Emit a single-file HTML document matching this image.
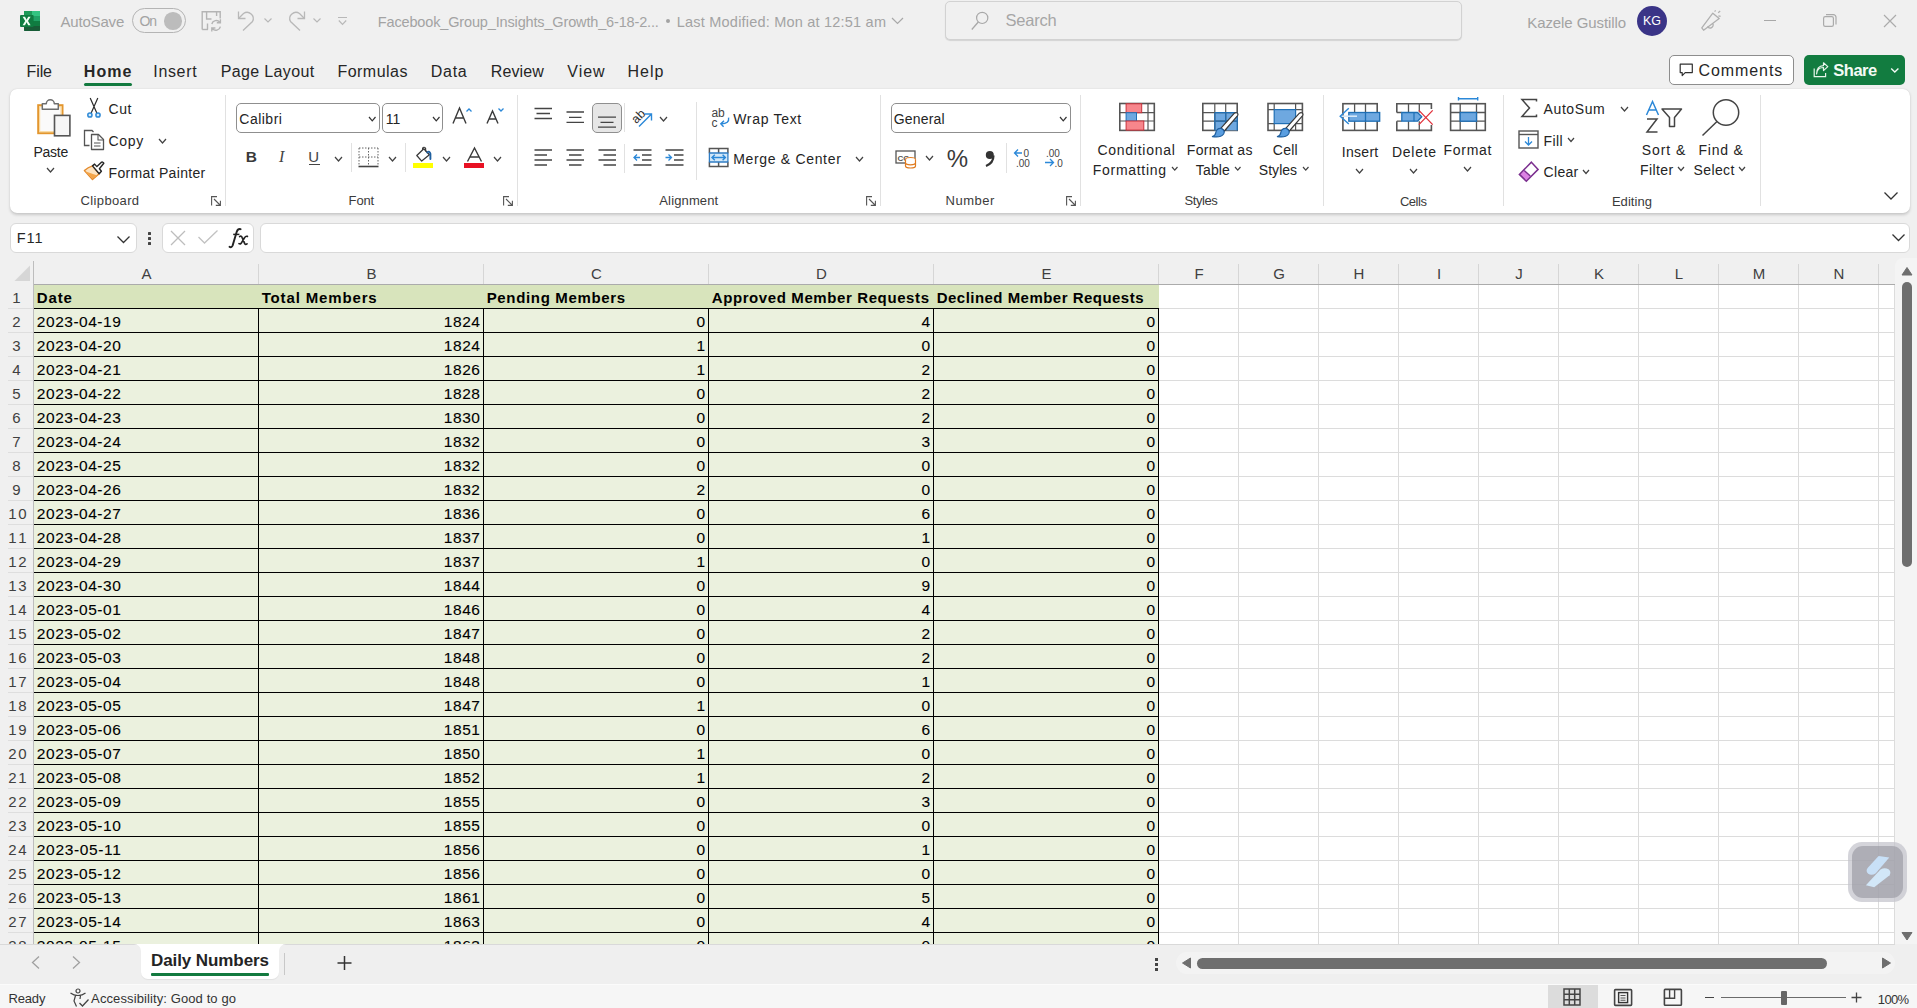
<!DOCTYPE html>
<html><head><meta charset="utf-8"><title>Excel</title>
<style>
html,body{margin:0;padding:0;}
body{width:1917px;height:1008px;overflow:hidden;position:relative;background:#f0f0f0;font-family:"Liberation Sans",sans-serif;}
.t{position:absolute;white-space:pre;line-height:1;}
.r{position:absolute;box-sizing:border-box;}
svg.r{overflow:visible;}
</style></head><body>
<svg class="r" style="left:20px;top:11px;" width="20" height="20" viewBox="0 0 20 20">
      <rect x="4" y="0" width="16" height="20" rx="1" fill="#21a366"/>
      <rect x="4" y="0" width="8" height="5" fill="#1d9a58"/>
      <rect x="12" y="0" width="8" height="5" fill="#33c481"/>
      <rect x="4" y="10" width="16" height="5" fill="#107c41"/>
      <path d="M4 15 H20 V19 A1 1 0 0 1 19 20 H5 A1 1 0 0 1 4 19 Z" fill="#185c37"/>
      <rect x="0" y="4" width="13.6" height="12" rx="1" fill="#107c41"/>
      <path d="M2.6 5.8 L5 5.8 L6.6 8.7 L8.2 5.8 L10.6 5.8 L8 10 L10.6 14.2 L8.2 14.2 L6.6 11.3 L5 14.2 L2.6 14.2 L5.2 10 Z" fill="#f0fff4"/>
    </svg><div class="t" style="left:60.40px;top:14.00px;font-size:15px;color:#a3a3a3;letter-spacing:-0.164px;">AutoSave</div><div class="r" style="left:132px;top:8px;width:54px;height:25px;border:1px solid #b4b4b4;border-radius:13px;"></div><div class="t" style="left:139.56px;top:13.95px;font-size:14px;color:#a3a3a3;letter-spacing:-1.272px;">On</div><div class="r" style="left:164px;top:12px;width:17.5px;height:17.5px;border-radius:50%;background:#bcbcbc;"></div><svg class="r" style="left:201px;top:11px;" width="22" height="21" viewBox="0 0 22 21">
      <path d="M1.2 18.5 V0.8 H19.2 V7.5" fill="none" stroke="#b4b4b4" stroke-width="1.4"/>
      <path d="M1.2 18.5 H7" fill="none" stroke="#b4b4b4" stroke-width="1.4"/>
      <path d="M5.6 0.8 V8 H10.5 M15.6 0.8 V5" fill="none" stroke="#b4b4b4" stroke-width="1.4"/>
      <path d="M6.5 12.5 V18.5" fill="none" stroke="#b4b4b4" stroke-width="1.4"/>
      <path d="M10.8 13 A4.6 4.6 0 0 1 18.8 11.2 M19.4 8.2 V11.8 H15.8" fill="none" stroke="#b4b4b4" stroke-width="1.4"/>
      <path d="M19.4 15.6 A4.6 4.6 0 0 1 11.4 17.6 M10.8 20.4 V17 H14.4" fill="none" stroke="#b4b4b4" stroke-width="1.4"/>
    </svg><svg class="r" style="left:236px;top:10px;" width="22" height="22" viewBox="0 0 22 22">
      <path d="M2.5 1.5 V8.5 H9.5" fill="none" stroke="#b8b8b8" stroke-width="1.3"/>
      <path d="M2.8 8.2 L7.5 3.5 A6.2 6.2 0 0 1 16.5 11.5 L7 20.5" fill="none" stroke="#b8b8b8" stroke-width="1.3"/>
    </svg><svg class="r" style="left:263px;top:17px;" width="10" height="7" viewBox="0 0 10 7"><path d="M1.5 1.5 L5 5 L8.5 1.5" fill="none" stroke="#b8b8b8" stroke-width="1.2"/></svg><svg class="r" style="left:285px;top:10px;" width="22" height="22" viewBox="0 0 22 22">
      <path d="M19.5 1.5 V8.5 H12.5" fill="none" stroke="#b8b8b8" stroke-width="1.3"/>
      <path d="M19.2 8.2 L14.5 3.5 A6.2 6.2 0 0 0 5.5 11.5 L15 20.5" fill="none" stroke="#b8b8b8" stroke-width="1.3"/>
    </svg><svg class="r" style="left:312px;top:17px;" width="10" height="7" viewBox="0 0 10 7"><path d="M1.5 1.5 L5 5 L8.5 1.5" fill="none" stroke="#b8b8b8" stroke-width="1.2"/></svg><svg class="r" style="left:337px;top:16px;" width="11" height="10" viewBox="0 0 11 10"><path d="M1 1.5 H10 M1.8 4.5 L5.5 8.3 L9.2 4.5" fill="none" stroke="#b8b8b8" stroke-width="1.2"/></svg><div class="t" style="left:377.83px;top:14.53px;font-size:14.5px;color:#a3a3a3;letter-spacing:-0.151px;">Facebook_Group_Insights_Growth_6-18-2...</div><div class="r" style="left:665.5px;top:19.3px;width:4px;height:4px;border-radius:50%;background:#a3a3a3;"></div><div class="t" style="left:676.83px;top:14.53px;font-size:14.5px;color:#a3a3a3;letter-spacing:0.208px;">Last Modified: Mon at 12:51 am</div><svg class="r" style="left:891px;top:17px;" width="13" height="8" viewBox="0 0 13 8"><path d="M1 1 L6.5 6.5 L12 1" fill="none" stroke="#a8a8a8" stroke-width="1.2"/></svg><div class="r" style="left:945px;top:1px;width:517px;height:39px;border:1px solid #d2d2d2;border-radius:5px;background:#f0f0f0;box-shadow:0 1px 1px rgba(0,0,0,0.12);"></div><svg class="r" style="left:970px;top:10px;" width="20" height="22" viewBox="0 0 20 22"><circle cx="12.2" cy="7.9" r="5.6" fill="none" stroke="#a8a8a8" stroke-width="1.2"/><path d="M8.3 12 L1.8 19.5" stroke="#a8a8a8" stroke-width="1.3"/></svg><div class="t" style="left:1005.61px;top:11.93px;font-size:16.5px;color:#a6a6a6;letter-spacing:-0.243px;">Search</div><div class="t" style="left:1527.30px;top:14.50px;font-size:15px;color:#a3a3a3;letter-spacing:-0.096px;">Kazele Gustillo</div><div class="r" style="left:1637px;top:6px;width:30px;height:30px;border-radius:50%;background:#3a3487;"></div><div class="t" style="left:1642.97px;top:15.22px;font-size:12.5px;color:#ffffff;">KG</div><svg class="r" style="left:1700px;top:10px;" width="22" height="22" viewBox="0 0 22 22">
      <path d="M1.8 17.8 L12.8 3.2 L19.2 8.6 L3.6 20.2 Z" fill="none" stroke="#b0b0b0" stroke-width="1.3" stroke-linejoin="round"/>
      <path d="M7.6 16.4 A2.8 2.8 0 0 0 12.8 13.6" fill="none" stroke="#b0b0b0" stroke-width="1.3"/>
      <path d="M14.6 1.6 L15.6 0.4 M18.2 2.8 L20.2 1 M18.4 5.8 L20.6 6.4" stroke="#b0b0b0" stroke-width="1.2"/>
    </svg><div class="r" style="left:1764px;top:19.5px;width:12px;height:1.2px;background:#a8a8a8;"></div><svg class="r" style="left:1822px;top:13px;" width="16" height="16" viewBox="0 0 16 16"><rect x="1.6" y="3.6" width="9.8" height="9.8" rx="1.6" fill="none" stroke="#ababab" stroke-width="1.2"/><path d="M4 1.6 H11.4 A2.6 2.6 0 0 1 14 4.2 V11.6" fill="none" stroke="#ababab" stroke-width="1.2"/></svg><svg class="r" style="left:1883px;top:14px;" width="14" height="14" viewBox="0 0 14 14"><path d="M1 1 L13 13 M13 1 L1 13" stroke="#ababab" stroke-width="1.2"/></svg>
<div class="t" style="left:26.54px;top:64.26px;font-size:16px;color:#262626;letter-spacing:-0.104px;">File</div><div class="t" style="left:83.84px;top:64.26px;font-size:16px;color:#262626;font-weight:700;letter-spacing:1.072px;">Home</div><div class="r" style="left:84px;top:83px;width:48px;height:3px;background:#137a3f;border-radius:2px;"></div><div class="t" style="left:153.34px;top:64.26px;font-size:16px;color:#262626;letter-spacing:0.651px;">Insert</div><div class="t" style="left:220.74px;top:64.26px;font-size:16px;color:#262626;letter-spacing:0.358px;">Page Layout</div><div class="t" style="left:337.44px;top:64.26px;font-size:16px;color:#262626;letter-spacing:0.469px;">Formulas</div><div class="t" style="left:430.74px;top:64.26px;font-size:16px;color:#262626;letter-spacing:0.724px;">Data</div><div class="t" style="left:490.84px;top:64.26px;font-size:16px;color:#262626;letter-spacing:0.080px;">Review</div><div class="t" style="left:567.34px;top:64.26px;font-size:16px;color:#262626;letter-spacing:0.959px;">View</div><div class="t" style="left:627.54px;top:64.26px;font-size:16px;color:#262626;letter-spacing:0.954px;">Help</div><div class="r" style="left:1669px;top:55px;width:125px;height:30px;border:1px solid #8d8d8d;border-radius:5px;background:#fff;"></div><svg class="r" style="left:1679px;top:63px;" width="15" height="15" viewBox="0 0 15 15"><path d="M1.2 1.2 H13.3 V9.6 H6.2 L3.2 12.6 V9.6 H1.2 Z" fill="none" stroke="#303030" stroke-width="1.2" stroke-linejoin="round"/></svg><div class="t" style="left:1698.54px;top:63.36px;font-size:16px;color:#262626;letter-spacing:0.916px;">Comments</div><div class="r" style="left:1804px;top:55px;width:101px;height:30px;background:#127c40;border-radius:5px;"></div><svg class="r" style="left:1813px;top:62px;" width="16" height="16" viewBox="0 0 16 16"><path d="M1.2 6.5 V14.6 H12.6 V11" fill="none" stroke="#e8f5ea" stroke-width="1.2"/><path d="M3.6 12 C4 7.5 6.5 5.5 10.5 5.5 V8.6 L14.8 4.6 L10.5 0.8 V3.6 C6 3.8 3.6 7 3.6 12 Z" fill="none" stroke="#e8f5ea" stroke-width="1.2" stroke-linejoin="round"/></svg><div class="t" style="left:1833.31px;top:62.23px;font-size:16.5px;color:#f4fbf5;font-weight:700;letter-spacing:-0.498px;">Share</div><svg class="r" style="left:1890px;top:67px;" width="10" height="7" viewBox="0 0 10 7"><path d="M1.2 1.5 L4.8 5 L8.4 1.5" fill="none" stroke="#f4fbf5" stroke-width="1.4"/></svg>
<div class="r" style="left:10px;top:89px;width:1900px;height:124px;background:#fff;border-radius:7px;box-shadow:0 1.5px 3px rgba(0,0,0,0.16),0 0 1px rgba(0,0,0,0.12);"></div><div class="r" style="left:225px;top:95px;width:1px;height:111px;background:#e1e1e1;"></div><div class="r" style="left:517px;top:95px;width:1px;height:111px;background:#e1e1e1;"></div><div class="r" style="left:880px;top:95px;width:1px;height:111px;background:#e1e1e1;"></div><div class="r" style="left:1080px;top:95px;width:1px;height:111px;background:#e1e1e1;"></div><div class="r" style="left:1323px;top:95px;width:1px;height:111px;background:#e1e1e1;"></div><div class="r" style="left:1503px;top:95px;width:1px;height:111px;background:#e1e1e1;"></div><div class="r" style="left:1760px;top:95px;width:1px;height:111px;background:#e1e1e1;"></div><div class="t" style="left:80.62px;top:193.90px;font-size:13px;color:#3b3b3b;letter-spacing:0.354px;">Clipboard</div><div class="t" style="left:348.62px;top:194.00px;font-size:13px;color:#3b3b3b;letter-spacing:-0.139px;">Font</div><div class="t" style="left:659.32px;top:193.80px;font-size:13px;color:#3b3b3b;letter-spacing:0.134px;">Alignment</div><div class="t" style="left:945.62px;top:193.90px;font-size:13px;color:#3b3b3b;letter-spacing:0.490px;">Number</div><div class="t" style="left:1184.62px;top:194.40px;font-size:13px;color:#3b3b3b;letter-spacing:-0.461px;">Styles</div><div class="t" style="left:1399.92px;top:194.50px;font-size:13px;color:#3b3b3b;letter-spacing:-0.452px;">Cells</div><div class="t" style="left:1611.92px;top:194.50px;font-size:13px;color:#3b3b3b;letter-spacing:0.039px;">Editing</div><svg class="r" style="left:211px;top:196px;" width="11" height="10" viewBox="0 0 11 10"><path d="M0.6 9.4 V0.6 H6" fill="none" stroke="#555" stroke-width="1.1"/><path d="M3 3 L9.5 9.5 M4.8 9.4 H9.4 V4.8" fill="none" stroke="#555" stroke-width="1.1"/></svg><svg class="r" style="left:503px;top:196px;" width="11" height="10" viewBox="0 0 11 10"><path d="M0.6 9.4 V0.6 H6" fill="none" stroke="#555" stroke-width="1.1"/><path d="M3 3 L9.5 9.5 M4.8 9.4 H9.4 V4.8" fill="none" stroke="#555" stroke-width="1.1"/></svg><svg class="r" style="left:866px;top:196px;" width="11" height="10" viewBox="0 0 11 10"><path d="M0.6 9.4 V0.6 H6" fill="none" stroke="#555" stroke-width="1.1"/><path d="M3 3 L9.5 9.5 M4.8 9.4 H9.4 V4.8" fill="none" stroke="#555" stroke-width="1.1"/></svg><svg class="r" style="left:1066px;top:196px;" width="11" height="10" viewBox="0 0 11 10"><path d="M0.6 9.4 V0.6 H6" fill="none" stroke="#555" stroke-width="1.1"/><path d="M3 3 L9.5 9.5 M4.8 9.4 H9.4 V4.8" fill="none" stroke="#555" stroke-width="1.1"/></svg><svg class="r" style="left:1883px;top:191px;" width="16" height="10" viewBox="0 0 16 10"><path d="M1.5 1.5 L8 8 L14.5 1.5" fill="none" stroke="#333" stroke-width="1.3"/></svg><svg class="r" style="left:36px;top:98px;" width="37" height="40" viewBox="0 0 37 40">
      <rect x="2.2" y="7.2" width="24.3" height="28" fill="#fafafa" stroke="#e3962e" stroke-width="2"/>
      <rect x="3.7" y="8.7" width="21.3" height="25" fill="none" stroke="#fbd592" stroke-width="1"/>
      <path d="M6.3 11.3 V5.8 H10.3 A4 4 0 0 1 18.3 5.8 H22.3 V11.3 Z" fill="#fff" stroke="#6e6e6e" stroke-width="1.5" stroke-linejoin="round"/>
      <rect x="18.5" y="17.4" width="15.4" height="20.4" fill="#f6f6f6" stroke="#555" stroke-width="1.6"/>
    </svg><div class="t" style="left:33.56px;top:144.85px;font-size:14px;color:#242424;letter-spacing:-0.274px;">Paste</div><svg class="r" style="left:46px;top:167px;" width="9" height="6" viewBox="0 0 9 6"><path d="M1 1 L4.5 5 L8 1" fill="none" stroke="#424242" stroke-width="1.2"/></svg><svg class="r" style="left:86px;top:97px;" width="16" height="22" viewBox="0 0 16 22">
      <path d="M4.2 1 L10.8 16 M11.8 1 L5.2 16" stroke="#2b2b2b" stroke-width="1.2"/>
      <circle cx="3.9" cy="18" r="2.1" fill="#d6ebfb" stroke="#2f8ad6" stroke-width="1.5"/>
      <circle cx="12" cy="18" r="2.1" fill="#d6ebfb" stroke="#2f8ad6" stroke-width="1.5"/>
    </svg><div class="t" style="left:108.56px;top:101.95px;font-size:14px;color:#242424;letter-spacing:0.509px;">Cut</div><svg class="r" style="left:83px;top:129px;" width="22" height="22" viewBox="0 0 22 22">
      <path d="M6.5 16.5 H1.5 V1.5 H9 L10.5 3" fill="none" stroke="#555" stroke-width="1.3"/>
      <path d="M8.5 5.5 H15.5 L20.5 10.5 V20.5 H8.5 Z" fill="#fff" stroke="#555" stroke-width="1.3" stroke-linejoin="round"/>
      <path d="M15 5.5 V11 H20.5" fill="none" stroke="#555" stroke-width="1.1"/>
      <path d="M11 14 H17.5 M11 17 H17.5" stroke="#555" stroke-width="1.1"/>
    </svg><div class="t" style="left:108.56px;top:133.55px;font-size:14px;color:#242424;letter-spacing:0.676px;">Copy</div><svg class="r" style="left:158px;top:138px;" width="9" height="6" viewBox="0 0 9 6"><path d="M1 1 L4.5 5 L8 1" fill="none" stroke="#424242" stroke-width="1.2"/></svg><svg class="r" style="left:80px;top:157px;" width="28" height="28" viewBox="0 0 28 28">
      <path d="M4.4 13.6 Q8 10.2 12.5 8.9 L19.2 16.7 L12.5 22.5 Z" fill="#fde3c0" stroke="#e38a2c" stroke-width="1.4" stroke-linejoin="round"/>
      <path d="M5 14.2 L17.4 18.4 L12.6 21.8 Z" fill="#f3a54a"/>
      <path d="M12.5 8.9 L14.6 7.1 L16.9 9.6 L21.2 5.4 Q22.6 4.4 23.8 6.2 L19.4 11.7 L21.4 14.2 L19.2 16.7 Z" fill="#fff" stroke="#262626" stroke-width="1.4" stroke-linejoin="round"/>
    </svg><div class="t" style="left:108.56px;top:166.05px;font-size:14px;color:#242424;letter-spacing:0.312px;">Format Painter</div><div class="r" style="left:236px;top:103px;width:144px;height:30px;border:1px solid #8f8f8f;border-radius:5px;"></div><div class="t" style="left:239.36px;top:111.75px;font-size:14px;color:#242424;letter-spacing:0.474px;">Calibri</div><svg class="r" style="left:368px;top:116px;" width="8.5" height="5.8" viewBox="0 0 8.5 5.8"><path d="M1 1 L4.25 4.8 L7.5 1" fill="none" stroke="#333" stroke-width="1.2"/></svg><div class="r" style="left:382px;top:103px;width:61px;height:30px;border:1px solid #8f8f8f;border-radius:5px;"></div><div class="t" style="left:385.66px;top:111.75px;font-size:14px;color:#242424;letter-spacing:0.169px;">11</div><svg class="r" style="left:432px;top:116px;" width="8.5" height="5.8" viewBox="0 0 8.5 5.8"><path d="M1 1 L4.25 4.8 L7.5 1" fill="none" stroke="#333" stroke-width="1.2"/></svg><svg class="r" style="left:451px;top:106px;" width="22" height="19" viewBox="0 0 22 19"><path d="M2 17.5 L8.5 2 L15 17.5 M4.5 12 H12.5" fill="none" stroke="#3a3a3a" stroke-width="1.4"/><path d="M15.5 5.5 L18 3 L20.5 5.5" fill="none" stroke="#2b88d8" stroke-width="1.3"/></svg><svg class="r" style="left:485px;top:106px;" width="20" height="19" viewBox="0 0 20 19"><path d="M2 17.5 L7.5 5 L13 17.5 M4 13 H11" fill="none" stroke="#3a3a3a" stroke-width="1.4"/><path d="M13.5 2.5 L16 5 L18.5 2.5" fill="none" stroke="#2b88d8" stroke-width="1.3"/></svg><div class="t" style="left:245.67px;top:149.48px;font-size:15.5px;color:#3a3a3a;font-weight:700;">B</div><div class="t" style="left:279.04px;top:149.26px;font-size:16px;color:#444;font-style:italic;font-family:'Liberation Serif';">I</div><div class="t" style="left:308.30px;top:148.90px;font-size:15px;color:#444;">U</div><div class="r" style="left:309px;top:164px;width:11px;height:1.4px;background:#444;"></div><svg class="r" style="left:334px;top:156px;" width="9" height="6" viewBox="0 0 9 6"><path d="M1 1 L4.5 5 L8 1" fill="none" stroke="#424242" stroke-width="1.2"/></svg><div class="r" style="left:351px;top:143px;width:1px;height:29px;background:#e1e1e1;"></div><svg class="r" style="left:358px;top:147px;" width="21" height="21" viewBox="0 0 21 21">
      <path d="M1 1 H20 M1 1 V19 M20 1 V19 M1 10 H20 M10.5 1 V19" fill="none" stroke="#666" stroke-width="1" stroke-dasharray="1.5 1.5"/>
      <path d="M0.5 19.5 H20.5" stroke="#444" stroke-width="1.6"/>
    </svg><svg class="r" style="left:388px;top:156px;" width="9" height="6" viewBox="0 0 9 6"><path d="M1 1 L4.5 5 L8 1" fill="none" stroke="#424242" stroke-width="1.2"/></svg><div class="r" style="left:405px;top:143px;width:1px;height:29px;background:#e1e1e1;"></div><svg class="r" style="left:412px;top:146px;" width="22" height="17" viewBox="0 0 22 17">
      <path d="M4.8 9.5 L11.8 2.7 L17.4 8.8 L9.7 15.1 Z" fill="#fff" stroke="#3a3a3a" stroke-width="1.3" stroke-linejoin="round"/>
      <path d="M10.6 4 V2.2 A1.6 1.6 0 0 1 13.6 2.4 V5.5" fill="none" stroke="#3a3a3a" stroke-width="1.2"/>
      <path d="M15.2 6.4 Q17.6 4.4 18.4 7.8 V13" fill="none" stroke="#1f5f9f" stroke-width="1.9" stroke-linecap="round"/>
    </svg><div class="r" style="left:413px;top:163px;width:20px;height:5px;background:#ffff00;"></div><svg class="r" style="left:442px;top:156px;" width="9" height="6" viewBox="0 0 9 6"><path d="M1 1 L4.5 5 L8 1" fill="none" stroke="#424242" stroke-width="1.2"/></svg><svg class="r" style="left:465px;top:147px;" width="20" height="15" viewBox="0 0 20 15"><path d="M2.5 14.5 L9.5 1 L16.5 14.5 M5 10 H14" fill="none" stroke="#3a3a3a" stroke-width="1.4"/></svg><div class="r" style="left:464px;top:163px;width:20px;height:5px;background:#e81123;"></div><svg class="r" style="left:493px;top:156px;" width="9" height="6" viewBox="0 0 9 6"><path d="M1 1 L4.5 5 L8 1" fill="none" stroke="#424242" stroke-width="1.2"/></svg>
<svg class="r" style="left:533px;top:104px;" width="30" height="30" viewBox="0 0 30 30"><path d="M1.5 4.5 H19 M3.5 9.5 H17 M1.5 14.5 H19 " stroke="#444" stroke-width="1.3"/></svg><svg class="r" style="left:565px;top:104px;" width="30" height="30" viewBox="0 0 30 30"><path d="M1.5 8 H19 M4 13.4 H16.5 M1.5 18.4 H19 " stroke="#444" stroke-width="1.3"/></svg><div class="r" style="left:592px;top:103px;width:30px;height:30px;background:#e6e6e6;border:1px solid #8f8f8f;border-radius:5px;"></div><svg class="r" style="left:597px;top:104px;" width="30" height="30" viewBox="0 0 30 30"><path d="M1 13.1 H19 M3.5 18.4 H16.5 M1 23.1 H19 " stroke="#444" stroke-width="1.3"/></svg><div class="r" style="left:624px;top:103px;width:1px;height:29px;background:#e1e1e1;"></div><svg class="r" style="left:631px;top:107px;" width="23" height="21" viewBox="0 0 23 21">
      <text x="0" y="13.5" transform="rotate(-45 7 9)" font-family="Liberation Sans" font-size="12.5" fill="#333">ab</text>
      <path d="M8 19.5 L20 7.5 M14 7 H20.5 V13.5" fill="none" stroke="#2b88d8" stroke-width="1.4"/>
    </svg><svg class="r" style="left:659px;top:116px;" width="9" height="6" viewBox="0 0 9 6"><path d="M1 1 L4.5 5 L8 1" fill="none" stroke="#424242" stroke-width="1.2"/></svg><svg class="r" style="left:533px;top:145px;" width="30" height="30" viewBox="0 0 30 30"><path d="M1.5 5 H19 M1.5 10 H14 M1.5 15 H19 M1.5 20 H14 " stroke="#444" stroke-width="1.3"/></svg><svg class="r" style="left:565px;top:145px;" width="30" height="30" viewBox="0 0 30 30"><path d="M1.5 5 H19 M4 10 H16.5 M1.5 15 H19 M4 20 H16.5 " stroke="#444" stroke-width="1.3"/></svg><svg class="r" style="left:597px;top:145px;" width="30" height="30" viewBox="0 0 30 30"><path d="M1.5 5 H19 M6.5 10 H19 M1.5 15 H19 M6.5 20 H19 " stroke="#444" stroke-width="1.3"/></svg><div class="r" style="left:624px;top:144px;width:1px;height:29px;background:#e1e1e1;"></div><svg class="r" style="left:632px;top:145px;" width="22" height="24" viewBox="0 0 22 24"><path d="M1.5 5 H19.5 M10 10 H19.5 M10 15 H19.5 M1.5 20 H19.5" stroke="#444" stroke-width="1.3"/><path d="M8 12.5 H2 M5 9.5 L2 12.5 L5 15.5" fill="none" stroke="#2b88d8" stroke-width="1.3"/></svg><svg class="r" style="left:664px;top:145px;" width="22" height="24" viewBox="0 0 22 24"><path d="M1.5 5 H19.5 M10 10 H19.5 M10 15 H19.5 M1.5 20 H19.5" stroke="#444" stroke-width="1.3"/><path d="M1.5 12.5 H7.5 M4.5 9.5 L7.5 12.5 L4.5 15.5" fill="none" stroke="#2b88d8" stroke-width="1.3"/></svg><div class="r" style="left:696px;top:102px;width:1px;height:78px;background:#e1e1e1;"></div><svg class="r" style="left:710px;top:107px;" width="22" height="22" viewBox="0 0 22 22">
      <text x="1.4" y="10.4" font-family="Liberation Sans" font-size="12" fill="#444">ab</text>
      <text x="1.6" y="20.2" font-family="Liberation Sans" font-size="12" fill="#444">c</text>
      <path d="M18.6 10.6 Q19.6 16.8 11.2 16.8 M14 13.8 L10.8 16.8 L13.6 19.8" fill="none" stroke="#2b88d8" stroke-width="1.4"/>
    </svg><div class="t" style="left:733.16px;top:111.95px;font-size:14px;color:#242424;letter-spacing:0.700px;">Wrap Text</div><svg class="r" style="left:708px;top:147px;" width="22" height="21" viewBox="0 0 22 21">
      <rect x="2" y="6" width="17.4" height="9" fill="#d3e8f8"/>
      <path d="M1.4 6.2 V1.4 H19.9 V6.2 M1.4 14.8 V19.6 H19.9 V14.8 M10.6 1.4 V6 M10.6 15 V19.6" fill="none" stroke="#555" stroke-width="1.5"/>
      <path d="M1.4 5.8 V15.2 M19.9 5.8 V15.2 M1.4 6 H19.9 M1.4 15 H19.9" fill="none" stroke="#2f7cc4" stroke-width="1.3"/>
      <path d="M4 10.5 H17.4 M6.8 7.8 L4 10.5 L6.8 13.2 M14.6 7.8 L17.4 10.5 L14.6 13.2" fill="none" stroke="#2b88d8" stroke-width="1.4"/>
    </svg><div class="t" style="left:733.16px;top:152.45px;font-size:14px;color:#242424;letter-spacing:0.678px;">Merge &amp; Center</div><svg class="r" style="left:855px;top:156px;" width="9" height="6" viewBox="0 0 9 6"><path d="M1 1 L4.5 5 L8 1" fill="none" stroke="#424242" stroke-width="1.2"/></svg><div class="r" style="left:891px;top:103px;width:180px;height:30px;border:1px solid #8f8f8f;border-radius:5px;"></div><div class="t" style="left:893.76px;top:112.05px;font-size:14px;color:#242424;letter-spacing:0.170px;">General</div><svg class="r" style="left:1059px;top:116px;" width="8.5" height="5.8" viewBox="0 0 8.5 5.8"><path d="M1 1 L4.25 4.8 L7.5 1" fill="none" stroke="#333" stroke-width="1.2"/></svg><svg class="r" style="left:895px;top:150px;" width="23" height="19" viewBox="0 0 23 19">
      <rect x="1" y="1" width="19" height="12" fill="#fff" stroke="#555" stroke-width="1.3"/>
      <text x="2.5" y="10.5" font-family="Liberation Sans" font-weight="700" font-size="8" fill="#555">CC</text>
      <ellipse cx="15.5" cy="9.5" rx="5" ry="2" fill="#fff" stroke="#e07b1f" stroke-width="1.2"/>
      <path d="M10.5 9.5 V16 A5 2 0 0 0 20.5 16 V9.5 M10.5 12.8 A5 2 0 0 0 20.5 12.8" fill="#fff" stroke="#e07b1f" stroke-width="1.2"/>
    </svg><svg class="r" style="left:925px;top:155px;" width="9" height="6" viewBox="0 0 9 6"><path d="M1 1 L4.5 5 L8 1" fill="none" stroke="#424242" stroke-width="1.2"/></svg><div class="t" style="left:946.76px;top:146.88px;font-size:24px;color:#3a3a3a;">%</div><svg class="r" style="left:984px;top:150px;" width="11" height="17" viewBox="0 0 11 17"><circle cx="5.8" cy="5" r="4" fill="#333"/><path d="M9.5 5.5 C9.5 10 7 14 2 16" fill="none" stroke="#333" stroke-width="2.2"/></svg><div class="r" style="left:1006px;top:143px;width:1px;height:30px;background:#e1e1e1;"></div><svg class="r" style="left:1013px;top:147px;" width="22" height="21" viewBox="0 0 22 21">
      <path d="M1.5 6 H9 M5 2.5 L1.5 6 L5 9.5" fill="none" stroke="#2b88d8" stroke-width="1.3"/>
      <text x="10.5" y="10" font-family="Liberation Sans" font-size="10" fill="#444">0</text>
      <text x="3" y="19.5" font-family="Liberation Sans" font-size="10" fill="#444">.00</text>
    </svg><svg class="r" style="left:1044px;top:147px;" width="22" height="21" viewBox="0 0 22 21">
      <text x="2" y="10" font-family="Liberation Sans" font-size="10" fill="#444">.00</text>
      <path d="M1 15.5 H9.5 M6 12 L9.5 15.5 L6 19" fill="none" stroke="#2b88d8" stroke-width="1.3"/>
      <text x="10.5" y="19.5" font-family="Liberation Sans" font-size="10" fill="#444">.0</text>
    </svg><svg class="r" style="left:1118px;top:102px;" width="38" height="30" viewBox="0 0 38 30">
      <rect x="1.8" y="1.5" width="34.5" height="26.9" fill="#fff" stroke="#555" stroke-width="1.6"/>
      <path d="M1.8 10.7 H36.3 M1.8 19 H36.3 M30 1.5 V28.4" stroke="#555" stroke-width="1.2"/>
      <rect x="8.1" y="1.8" width="15.6" height="8.9" fill="#f7868c" stroke="#c8323c" stroke-width="1"/>
      <rect x="8.1" y="10.7" width="10.4" height="8.3" fill="#6ea8e0" stroke="#1f6fb5" stroke-width="1"/>
      <rect x="8.1" y="19" width="17.7" height="9.1" fill="#f7868c" stroke="#c8323c" stroke-width="1"/>
    </svg><div class="t" style="left:1097.46px;top:142.75px;font-size:14px;color:#242424;letter-spacing:0.728px;">Conditional</div><div class="t" style="left:1092.86px;top:162.95px;font-size:14px;color:#242424;letter-spacing:0.692px;">Formatting</div><svg class="r" style="left:1171px;top:166px;" width="7.5" height="5.2" viewBox="0 0 7.5 5.2"><path d="M1 1 L3.75 4.2 L6.5 1" fill="none" stroke="#424242" stroke-width="1.2"/></svg><svg class="r" style="left:1199px;top:102px;" width="44" height="38" viewBox="0 0 44 38">
      <rect x="3.8" y="1.5" width="34.4" height="26.9" fill="#fff" stroke="#555" stroke-width="1.6"/>
      <rect x="15.8" y="10.7" width="22.4" height="17.7" fill="#6ea8e0"/>
      <path d="M3.8 10.7 H38.2 M3.8 19.2 H38.2 M15.8 1.5 V28.4 M26.7 1.5 V28.4" stroke="#555" stroke-width="1.2"/>
      <path d="M15.8 10.7 H38.2 M15.8 19.2 H38.2 M15.8 10.7 V28.4 M26.7 10.7 V28.4 M38.2 10.7 V28.4" stroke="#1f6fb5" stroke-width="1.2"/>

      <path d="M38.2 10.9 Q39.6 12 38.6 13.6 L25.4 29 L22 26.2 L35.4 11.2 Q36.8 10 38.2 10.9 Z" fill="#fff" stroke="#3a3a3a" stroke-width="1.2" stroke-linejoin="round"/>
      <path d="M22.2 26.4 Q26.6 28.6 24.6 32 Q21.6 36 13.4 34.6 Q16.4 33.6 16.8 30.6 Q17.6 26 22.2 26.4 Z" fill="#5a9ee0" stroke="#1f5f9f" stroke-width="1.2" stroke-linejoin="round"/>
    </svg><div class="t" style="left:1186.76px;top:142.75px;font-size:14px;color:#242424;letter-spacing:0.339px;">Format as</div><div class="t" style="left:1195.86px;top:162.95px;font-size:14px;color:#242424;letter-spacing:0.137px;">Table</div><svg class="r" style="left:1234px;top:166px;" width="7.5" height="5.2" viewBox="0 0 7.5 5.2"><path d="M1 1 L3.75 4.2 L6.5 1" fill="none" stroke="#424242" stroke-width="1.2"/></svg><svg class="r" style="left:1264px;top:102px;" width="44" height="38" viewBox="0 0 44 38">
      <rect x="4" y="1.5" width="34.4" height="26.9" fill="#fff" stroke="#555" stroke-width="1.6"/>
      <path d="M4 7.6 H10.2 M31.6 7.6 H38.4 M4 21.6 H10.2 M31.6 21.6 H38.4 M10.2 1.5 V7.6 M10.2 21.6 V28.4 M31.6 1.5 V7.6 M31.6 21.6 V28.4" stroke="#555" stroke-width="1.2"/>
      <rect x="10.2" y="7.6" width="21.4" height="14" fill="#6ea8e0" stroke="#1f6fb5" stroke-width="1.2"/>

      <path d="M38.2 10.9 Q39.6 12 38.6 13.6 L25.4 29 L22 26.2 L35.4 11.2 Q36.8 10 38.2 10.9 Z" fill="#fff" stroke="#3a3a3a" stroke-width="1.2" stroke-linejoin="round"/>
      <path d="M22.2 26.4 Q26.6 28.6 24.6 32 Q21.6 36 13.4 34.6 Q16.4 33.6 16.8 30.6 Q17.6 26 22.2 26.4 Z" fill="#5a9ee0" stroke="#1f5f9f" stroke-width="1.2" stroke-linejoin="round"/>
    </svg><div class="t" style="left:1272.86px;top:142.75px;font-size:14px;color:#242424;letter-spacing:0.230px;">Cell</div><div class="t" style="left:1258.86px;top:162.95px;font-size:14px;color:#242424;letter-spacing:0.015px;">Styles</div><svg class="r" style="left:1301.5px;top:166px;" width="7.5" height="5.2" viewBox="0 0 7.5 5.2"><path d="M1 1 L3.75 4.2 L6.5 1" fill="none" stroke="#424242" stroke-width="1.2"/></svg><svg class="r" style="left:1335px;top:92px;" width="50" height="42" viewBox="0 0 50 42">
      <rect x="7.9" y="11.7" width="34.3" height="26.7" fill="#fff" stroke="#555" stroke-width="1.6"/>
      <path d="M19.6 11.7 V38.4 M30.5 11.7 V38.4" stroke="#555" stroke-width="1.3"/>
      <rect x="13.8" y="20.5" width="30.9" height="8.7" fill="#6ea8e0" stroke="#1f6fb5" stroke-width="1.3"/>
      <path d="M30.5 20.5 V29.2" stroke="#1f6fb5" stroke-width="1.3"/>
      <path d="M5.2 24.2 H22" stroke="#d6e8f8" stroke-width="1.6"/>
      <path d="M13.8 16.3 L5.2 24.2 L13.8 32.1" fill="none" stroke="#2b88d8" stroke-width="1.4"/>
    </svg><div class="t" style="left:1341.76px;top:144.85px;font-size:14px;color:#242424;letter-spacing:0.300px;">Insert</div><svg class="r" style="left:1355px;top:168px;" width="9" height="6" viewBox="0 0 9 6"><path d="M1 1 L4.5 5 L8 1" fill="none" stroke="#424242" stroke-width="1.2"/></svg><svg class="r" style="left:1390px;top:92px;" width="46" height="42" viewBox="0 0 46 42">
      <path d="M6.8 20.5 V11.7 H41.4 V17 M6.8 29.2 V38.4 H41.4 V33" fill="none" stroke="#555" stroke-width="1.6"/>
      <path d="M18.5 11.7 V20.5 M29.3 11.7 V20.5 M18.5 29.2 V38.4 M29.3 29.2 V38.4 M6.8 20.5 H11.8 M6.8 29.2 H11.8" stroke="#555" stroke-width="1.3"/>
      <path d="M11.8 20.5 H27.5 L31.8 24.8 L27.5 29.2 H11.8 Z" fill="#6ea8e0" stroke="#1f6fb5" stroke-width="1.3" stroke-linejoin="round"/>
      <path d="M24 20.5 V29.2" stroke="#1f6fb5" stroke-width="1.2"/>
      <path d="M28.9 18.4 L42.7 32.6 M42.7 18.4 L28.9 32.6" stroke="#e0303a" stroke-width="1.3"/>
    </svg><div class="t" style="left:1392.06px;top:144.85px;font-size:14px;color:#242424;letter-spacing:0.709px;">Delete</div><svg class="r" style="left:1409px;top:168px;" width="9" height="6" viewBox="0 0 9 6"><path d="M1 1 L4.5 5 L8 1" fill="none" stroke="#424242" stroke-width="1.2"/></svg><svg class="r" style="left:1445px;top:92px;" width="46" height="42" viewBox="0 0 46 42">
      <path d="M13.5 5 V8.5 M32.7 5 V8.5 M13.5 6.7 H32.7" stroke="#2b88d8" stroke-width="1.4"/>
      <rect x="5.6" y="11.7" width="34.7" height="26.7" fill="#fff" stroke="#555" stroke-width="1.6"/>
      <path d="M15.2 11.7 V38.4 M31.5 11.7 V38.4 M5.6 20.5 H40.3 M5.6 29.2 H40.3" stroke="#555" stroke-width="1.3"/>
      <rect x="15.2" y="20.5" width="16.3" height="8.7" fill="#6ea8e0" stroke="#1f6fb5" stroke-width="1.3"/>
    </svg><div class="t" style="left:1443.56px;top:143.05px;font-size:14px;color:#242424;letter-spacing:0.697px;">Format</div><svg class="r" style="left:1463px;top:166px;" width="9" height="6" viewBox="0 0 9 6"><path d="M1 1 L4.5 5 L8 1" fill="none" stroke="#424242" stroke-width="1.2"/></svg><svg class="r" style="left:1520px;top:98px;" width="18" height="20" viewBox="0 0 18 20"><path d="M16.5 3.5 V1.5 H2 L9.5 10 L2 18.5 H16.5 V16.5" fill="none" stroke="#444" stroke-width="1.5" stroke-linejoin="miter"/></svg><div class="t" style="left:1543.56px;top:102.15px;font-size:14px;color:#242424;letter-spacing:0.604px;">AutoSum</div><svg class="r" style="left:1620px;top:106px;" width="9" height="6" viewBox="0 0 9 6"><path d="M1 1 L4.5 5 L8 1" fill="none" stroke="#424242" stroke-width="1.2"/></svg><svg class="r" style="left:1518px;top:130px;" width="22" height="20" viewBox="0 0 22 20">
      <rect x="1" y="1" width="19" height="17" fill="#fff" stroke="#555" stroke-width="1.4"/>
      <path d="M1 4.5 H20" stroke="#555" stroke-width="1.4"/>
      <path d="M10.5 7 V15 M7 11.5 L10.5 15 L14 11.5" fill="none" stroke="#2b88d8" stroke-width="1.3"/>
    </svg><div class="t" style="left:1543.56px;top:133.75px;font-size:14px;color:#242424;letter-spacing:0.375px;">Fill</div><svg class="r" style="left:1567px;top:137px;" width="8" height="5.5" viewBox="0 0 8 5.5"><path d="M1 1 L4.0 4.5 L7 1" fill="none" stroke="#424242" stroke-width="1.2"/></svg><svg class="r" style="left:1512px;top:158px;" width="34" height="28" viewBox="0 0 34 28">
      <path d="M7.4 16.4 L12.2 12.5 L18.3 18 L14.3 23.2 Z" fill="#dc82e3"/>
      <path d="M19.4 4.2 L26.1 11.4 L14.3 23.2 L7.4 16.4 Z" fill="none" stroke="#7b2f8f" stroke-width="1.5" stroke-linejoin="miter"/>
      <path d="M12.2 12.5 L18.3 18" stroke="#7b2f8f" stroke-width="1.4"/>
    </svg><div class="t" style="left:1543.56px;top:165.45px;font-size:14px;color:#242424;letter-spacing:0.316px;">Clear</div><svg class="r" style="left:1582px;top:169px;" width="8" height="5.5" viewBox="0 0 8 5.5"><path d="M1 1 L4.0 4.5 L7 1" fill="none" stroke="#424242" stroke-width="1.2"/></svg><svg class="r" style="left:1645px;top:100px;" width="40" height="35" viewBox="0 0 40 35">
      <path d="M1.5 15 L7.5 1.5 L13.5 15 M3.8 10 H11.2" fill="none" stroke="#2b88d8" stroke-width="1.5"/>
      <path d="M2 19 H12 L2 32 H12.5" fill="none" stroke="#444" stroke-width="1.5"/>
      <path d="M17 9 H36.5 L29.5 17.5 V26.5 H24.5 V17.5 Z" fill="none" stroke="#444" stroke-width="1.5" stroke-linejoin="round"/>
    </svg><div class="t" style="left:1641.66px;top:142.95px;font-size:14px;color:#242424;letter-spacing:0.959px;">Sort &amp;</div><div class="t" style="left:1639.96px;top:162.65px;font-size:14px;color:#242424;letter-spacing:0.401px;">Filter</div><svg class="r" style="left:1677px;top:166px;" width="8" height="5.5" viewBox="0 0 8 5.5"><path d="M1 1 L4.0 4.5 L7 1" fill="none" stroke="#424242" stroke-width="1.2"/></svg><svg class="r" style="left:1701px;top:98px;" width="40" height="40" viewBox="0 0 40 40"><circle cx="25" cy="14.5" r="12.7" fill="none" stroke="#444" stroke-width="1.5"/><path d="M16 23.5 L1.5 37.5" stroke="#444" stroke-width="1.5"/></svg><div class="t" style="left:1698.46px;top:142.95px;font-size:14px;color:#242424;letter-spacing:0.789px;">Find &amp;</div><div class="t" style="left:1693.56px;top:162.65px;font-size:14px;color:#242424;letter-spacing:0.379px;">Select</div><svg class="r" style="left:1738px;top:166px;" width="8" height="5.5" viewBox="0 0 8 5.5"><path d="M1 1 L4.0 4.5 L7 1" fill="none" stroke="#424242" stroke-width="1.2"/></svg>
<div class="r" style="left:10px;top:223px;width:127px;height:30px;background:#fff;border:1px solid #d9d9d9;border-radius:6px;box-sizing:border-box;"></div><div class="t" style="left:16.63px;top:231.33px;font-size:14.5px;color:#262626;letter-spacing:0.972px;">F11</div><svg class="r" style="left:116px;top:235px;" width="15" height="10" viewBox="0 0 15 10"><path d="M1.5 1.5 L7.5 7.5 L13.5 1.5" fill="none" stroke="#333" stroke-width="1.3"/></svg><div class="r" style="left:148px;top:232.0px;width:3px;height:3px;background:#444;border-radius:0.5px;"></div><div class="r" style="left:148px;top:237.0px;width:3px;height:3px;background:#444;border-radius:0.5px;"></div><div class="r" style="left:148px;top:242.0px;width:3px;height:3px;background:#444;border-radius:0.5px;"></div><div class="r" style="left:162px;top:223px;width:92px;height:30px;background:#fff;border:1px solid #d9d9d9;border-radius:6px;box-sizing:border-box;"></div><svg class="r" style="left:169px;top:229px;" width="18" height="18" viewBox="0 0 18 18"><path d="M2 2 L16 16 M16 2 L2 16" stroke="#bdbdbd" stroke-width="1.3"/></svg><svg class="r" style="left:197px;top:229px;" width="22" height="16" viewBox="0 0 22 16"><path d="M1.5 8 L7.5 14 L20.5 1.5" fill="none" stroke="#c2c2c2" stroke-width="1.3"/></svg><svg class="r" style="left:226px;top:226px;" width="24" height="24" viewBox="0 0 24 24"><path d="M3.5 20.8 Q5.2 22.2 6.6 19.6 L10.8 5.6 Q12 2.4 14.6 3.2" fill="none" stroke="#222" stroke-width="1.9" stroke-linecap="round"/><path d="M7.2 8.4 H13.4" stroke="#222" stroke-width="1.5"/><path d="M13.6 10.6 Q15.4 9.4 16.2 11.6 L18.6 17.4 Q19.4 19.2 21 17.8 M21.4 10.4 Q19.8 9.8 18.6 11.6 L15.6 16.6 Q14.6 18.6 13 17.6" fill="none" stroke="#222" stroke-width="1.7" stroke-linecap="round"/></svg><div class="r" style="left:260px;top:223px;width:1650px;height:30px;background:#fff;border:1px solid #d9d9d9;border-radius:6px;box-sizing:border-box;"></div><svg class="r" style="left:1891px;top:233px;" width="15" height="10" viewBox="0 0 15 10"><path d="M1.5 1.5 L7.5 7.5 L13.5 1.5" fill="none" stroke="#333" stroke-width="1.3"/></svg>
<div class="r" style="left:34px;top:285px;width:1861px;height:659px;background:#fff;"></div><div class="r" style="left:1159px;top:285px;width:736px;height:659px;background-image:repeating-linear-gradient(to bottom, transparent 0, transparent 23px, #dcdcdc 23px, #dcdcdc 24px),repeating-linear-gradient(to right, transparent 0, transparent 79px, #dcdcdc 79px, #dcdcdc 80px);"></div><div class="r" style="left:1894px;top:285px;width:1px;height:659px;background:#dcdcdc;"></div><div class="r" style="left:34px;top:285px;width:1125px;height:23px;background:#d8e4bc;"></div><div class="r" style="left:34px;top:309px;width:1124px;height:635px;background:#ebf1de;"></div><div class="r" style="left:34px;top:308px;width:1125px;height:636px;background-image:repeating-linear-gradient(to bottom, #000 0, #000 1px, transparent 1px, transparent 24px);"></div><div class="r" style="left:258px;top:308px;width:1px;height:636px;background:#000;"></div><div class="r" style="left:483px;top:308px;width:1px;height:636px;background:#000;"></div><div class="r" style="left:708px;top:308px;width:1px;height:636px;background:#000;"></div><div class="r" style="left:933px;top:308px;width:1px;height:636px;background:#000;"></div><div class="r" style="left:1158px;top:308px;width:1px;height:636px;background:#000;"></div><div class="r" style="left:0px;top:258px;width:1895px;height:26px;background:#f0f0f0;"></div><div class="r" style="left:33px;top:284px;width:1862px;height:1px;background:#ababab;"></div><div class="t" style="left:141.50px;top:266.20px;font-size:15px;color:#404040;">A</div><div class="r" style="left:258px;top:264px;width:1px;height:20px;background:#d6d6d6;"></div><div class="t" style="left:366.50px;top:266.20px;font-size:15px;color:#404040;">B</div><div class="r" style="left:483px;top:264px;width:1px;height:20px;background:#d6d6d6;"></div><div class="t" style="left:591.09px;top:266.20px;font-size:15px;color:#404040;">C</div><div class="r" style="left:708px;top:264px;width:1px;height:20px;background:#d6d6d6;"></div><div class="t" style="left:816.09px;top:266.20px;font-size:15px;color:#404040;">D</div><div class="r" style="left:933px;top:264px;width:1px;height:20px;background:#d6d6d6;"></div><div class="t" style="left:1041.50px;top:266.20px;font-size:15px;color:#404040;">E</div><div class="r" style="left:1158px;top:264px;width:1px;height:20px;background:#d6d6d6;"></div><div class="t" style="left:1194.42px;top:266.20px;font-size:15px;color:#404040;">F</div><div class="r" style="left:1238px;top:264px;width:1px;height:20px;background:#d6d6d6;"></div><div class="t" style="left:1273.16px;top:266.20px;font-size:15px;color:#404040;">G</div><div class="r" style="left:1318px;top:264px;width:1px;height:20px;background:#d6d6d6;"></div><div class="t" style="left:1353.59px;top:266.20px;font-size:15px;color:#404040;">H</div><div class="r" style="left:1398px;top:264px;width:1px;height:20px;background:#d6d6d6;"></div><div class="t" style="left:1436.91px;top:266.20px;font-size:15px;color:#404040;">I</div><div class="r" style="left:1478px;top:264px;width:1px;height:20px;background:#d6d6d6;"></div><div class="t" style="left:1515.25px;top:266.20px;font-size:15px;color:#404040;">J</div><div class="r" style="left:1558px;top:264px;width:1px;height:20px;background:#d6d6d6;"></div><div class="t" style="left:1594.00px;top:266.20px;font-size:15px;color:#404040;">K</div><div class="r" style="left:1638px;top:264px;width:1px;height:20px;background:#d6d6d6;"></div><div class="t" style="left:1674.83px;top:266.20px;font-size:15px;color:#404040;">L</div><div class="r" style="left:1718px;top:264px;width:1px;height:20px;background:#d6d6d6;"></div><div class="t" style="left:1752.75px;top:266.20px;font-size:15px;color:#404040;">M</div><div class="r" style="left:1798px;top:264px;width:1px;height:20px;background:#d6d6d6;"></div><div class="t" style="left:1833.59px;top:266.20px;font-size:15px;color:#404040;">N</div><div class="r" style="left:1878px;top:264px;width:1px;height:20px;background:#d6d6d6;"></div><div class="r" style="left:33px;top:261px;width:1px;height:683px;background:#bdbdbd;"></div><svg class="r" style="left:14px;top:265px;" width="17" height="17" viewBox="0 0 17 17"><path d="M16 0.5 V16 H0.5 Z" fill="#d6d6d6"/></svg><div class="r" style="left:0px;top:285px;width:33px;height:659px;background:#f0f0f0;"></div><div class="r" style="left:8px;top:308px;width:25px;height:1px;background:#dedede;"></div><div class="t" style="left:12.23px;top:290.20px;font-size:15px;color:#404040;">1</div><div class="r" style="left:8px;top:332px;width:25px;height:1px;background:#dedede;"></div><div class="t" style="left:12.23px;top:314.20px;font-size:15px;color:#404040;">2</div><div class="r" style="left:8px;top:356px;width:25px;height:1px;background:#dedede;"></div><div class="t" style="left:12.23px;top:338.20px;font-size:15px;color:#404040;">3</div><div class="r" style="left:8px;top:380px;width:25px;height:1px;background:#dedede;"></div><div class="t" style="left:12.23px;top:362.20px;font-size:15px;color:#404040;">4</div><div class="r" style="left:8px;top:404px;width:25px;height:1px;background:#dedede;"></div><div class="t" style="left:12.23px;top:386.20px;font-size:15px;color:#404040;">5</div><div class="r" style="left:8px;top:428px;width:25px;height:1px;background:#dedede;"></div><div class="t" style="left:12.23px;top:410.20px;font-size:15px;color:#404040;">6</div><div class="r" style="left:8px;top:452px;width:25px;height:1px;background:#dedede;"></div><div class="t" style="left:12.23px;top:434.20px;font-size:15px;color:#404040;">7</div><div class="r" style="left:8px;top:476px;width:25px;height:1px;background:#dedede;"></div><div class="t" style="left:12.23px;top:458.20px;font-size:15px;color:#404040;">8</div><div class="r" style="left:8px;top:500px;width:25px;height:1px;background:#dedede;"></div><div class="t" style="left:12.23px;top:482.20px;font-size:15px;color:#404040;">9</div><div class="r" style="left:8px;top:524px;width:25px;height:1px;background:#dedede;"></div><div class="t" style="left:8.30px;top:506.20px;font-size:15px;color:#404040;letter-spacing:1.512px;">10</div><div class="r" style="left:8px;top:548px;width:25px;height:1px;background:#dedede;"></div><div class="t" style="left:8.30px;top:530.20px;font-size:15px;color:#404040;letter-spacing:2.622px;">11</div><div class="r" style="left:8px;top:572px;width:25px;height:1px;background:#dedede;"></div><div class="t" style="left:8.30px;top:554.20px;font-size:15px;color:#404040;letter-spacing:1.512px;">12</div><div class="r" style="left:8px;top:596px;width:25px;height:1px;background:#dedede;"></div><div class="t" style="left:8.30px;top:578.20px;font-size:15px;color:#404040;letter-spacing:1.512px;">13</div><div class="r" style="left:8px;top:620px;width:25px;height:1px;background:#dedede;"></div><div class="t" style="left:8.30px;top:602.20px;font-size:15px;color:#404040;letter-spacing:1.512px;">14</div><div class="r" style="left:8px;top:644px;width:25px;height:1px;background:#dedede;"></div><div class="t" style="left:8.30px;top:626.20px;font-size:15px;color:#404040;letter-spacing:1.512px;">15</div><div class="r" style="left:8px;top:668px;width:25px;height:1px;background:#dedede;"></div><div class="t" style="left:8.30px;top:650.20px;font-size:15px;color:#404040;letter-spacing:1.512px;">16</div><div class="r" style="left:8px;top:692px;width:25px;height:1px;background:#dedede;"></div><div class="t" style="left:8.30px;top:674.20px;font-size:15px;color:#404040;letter-spacing:1.512px;">17</div><div class="r" style="left:8px;top:716px;width:25px;height:1px;background:#dedede;"></div><div class="t" style="left:8.30px;top:698.20px;font-size:15px;color:#404040;letter-spacing:1.512px;">18</div><div class="r" style="left:8px;top:740px;width:25px;height:1px;background:#dedede;"></div><div class="t" style="left:8.30px;top:722.20px;font-size:15px;color:#404040;letter-spacing:1.512px;">19</div><div class="r" style="left:8px;top:764px;width:25px;height:1px;background:#dedede;"></div><div class="t" style="left:8.30px;top:746.20px;font-size:15px;color:#404040;letter-spacing:1.512px;">20</div><div class="r" style="left:8px;top:788px;width:25px;height:1px;background:#dedede;"></div><div class="t" style="left:8.30px;top:770.20px;font-size:15px;color:#404040;letter-spacing:1.512px;">21</div><div class="r" style="left:8px;top:812px;width:25px;height:1px;background:#dedede;"></div><div class="t" style="left:8.30px;top:794.20px;font-size:15px;color:#404040;letter-spacing:1.512px;">22</div><div class="r" style="left:8px;top:836px;width:25px;height:1px;background:#dedede;"></div><div class="t" style="left:8.30px;top:818.20px;font-size:15px;color:#404040;letter-spacing:1.512px;">23</div><div class="r" style="left:8px;top:860px;width:25px;height:1px;background:#dedede;"></div><div class="t" style="left:8.30px;top:842.20px;font-size:15px;color:#404040;letter-spacing:1.512px;">24</div><div class="r" style="left:8px;top:884px;width:25px;height:1px;background:#dedede;"></div><div class="t" style="left:8.30px;top:866.20px;font-size:15px;color:#404040;letter-spacing:1.512px;">25</div><div class="r" style="left:8px;top:908px;width:25px;height:1px;background:#dedede;"></div><div class="t" style="left:8.30px;top:890.20px;font-size:15px;color:#404040;letter-spacing:1.512px;">26</div><div class="r" style="left:8px;top:932px;width:25px;height:1px;background:#dedede;"></div><div class="t" style="left:8.30px;top:914.20px;font-size:15px;color:#404040;letter-spacing:1.512px;">27</div><div class="r" style="left:8px;top:956px;width:25px;height:1px;background:#dedede;"></div><div class="t" style="left:8.30px;top:938.20px;font-size:15px;color:#404040;letter-spacing:1.512px;">28</div><div class="t" style="left:36.70px;top:290.00px;font-size:15px;color:#000;font-weight:700;letter-spacing:0.895px;">Date</div><div class="t" style="left:261.70px;top:290.00px;font-size:15px;color:#000;font-weight:700;letter-spacing:0.853px;">Total Members</div><div class="t" style="left:486.70px;top:290.00px;font-size:15px;color:#000;font-weight:700;letter-spacing:0.658px;">Pending Members</div><div class="t" style="left:711.70px;top:290.00px;font-size:15px;color:#000;font-weight:700;letter-spacing:0.605px;">Approved Member Requests</div><div class="t" style="left:936.70px;top:290.00px;font-size:15px;color:#000;font-weight:700;letter-spacing:0.474px;">Declined Member Requests</div><div class="t" style="left:36.87px;top:313.68px;font-size:15.5px;color:#000;letter-spacing:0.515px;-webkit-text-stroke:0.1px #000;">2023-04-19</div><div class="t" style="left:443.67px;top:313.68px;font-size:15.5px;color:#000;letter-spacing:0.617px;-webkit-text-stroke:0.1px #000;">1824</div><div class="t" style="left:696.39px;top:313.68px;font-size:15.5px;color:#000;-webkit-text-stroke:0.1px #000;">0</div><div class="t" style="left:921.39px;top:313.68px;font-size:15.5px;color:#000;-webkit-text-stroke:0.1px #000;">4</div><div class="t" style="left:1146.39px;top:313.68px;font-size:15.5px;color:#000;-webkit-text-stroke:0.1px #000;">0</div><div class="t" style="left:36.87px;top:337.68px;font-size:15.5px;color:#000;letter-spacing:0.515px;-webkit-text-stroke:0.1px #000;">2023-04-20</div><div class="t" style="left:443.67px;top:337.68px;font-size:15.5px;color:#000;letter-spacing:0.617px;-webkit-text-stroke:0.1px #000;">1824</div><div class="t" style="left:696.39px;top:337.68px;font-size:15.5px;color:#000;-webkit-text-stroke:0.1px #000;">1</div><div class="t" style="left:921.39px;top:337.68px;font-size:15.5px;color:#000;-webkit-text-stroke:0.1px #000;">0</div><div class="t" style="left:1146.39px;top:337.68px;font-size:15.5px;color:#000;-webkit-text-stroke:0.1px #000;">0</div><div class="t" style="left:36.87px;top:361.68px;font-size:15.5px;color:#000;letter-spacing:0.515px;-webkit-text-stroke:0.1px #000;">2023-04-21</div><div class="t" style="left:443.67px;top:361.68px;font-size:15.5px;color:#000;letter-spacing:0.617px;-webkit-text-stroke:0.1px #000;">1826</div><div class="t" style="left:696.39px;top:361.68px;font-size:15.5px;color:#000;-webkit-text-stroke:0.1px #000;">1</div><div class="t" style="left:921.39px;top:361.68px;font-size:15.5px;color:#000;-webkit-text-stroke:0.1px #000;">2</div><div class="t" style="left:1146.39px;top:361.68px;font-size:15.5px;color:#000;-webkit-text-stroke:0.1px #000;">0</div><div class="t" style="left:36.87px;top:385.68px;font-size:15.5px;color:#000;letter-spacing:0.515px;-webkit-text-stroke:0.1px #000;">2023-04-22</div><div class="t" style="left:443.67px;top:385.68px;font-size:15.5px;color:#000;letter-spacing:0.617px;-webkit-text-stroke:0.1px #000;">1828</div><div class="t" style="left:696.39px;top:385.68px;font-size:15.5px;color:#000;-webkit-text-stroke:0.1px #000;">0</div><div class="t" style="left:921.39px;top:385.68px;font-size:15.5px;color:#000;-webkit-text-stroke:0.1px #000;">2</div><div class="t" style="left:1146.39px;top:385.68px;font-size:15.5px;color:#000;-webkit-text-stroke:0.1px #000;">0</div><div class="t" style="left:36.87px;top:409.68px;font-size:15.5px;color:#000;letter-spacing:0.515px;-webkit-text-stroke:0.1px #000;">2023-04-23</div><div class="t" style="left:443.67px;top:409.68px;font-size:15.5px;color:#000;letter-spacing:0.617px;-webkit-text-stroke:0.1px #000;">1830</div><div class="t" style="left:696.39px;top:409.68px;font-size:15.5px;color:#000;-webkit-text-stroke:0.1px #000;">0</div><div class="t" style="left:921.39px;top:409.68px;font-size:15.5px;color:#000;-webkit-text-stroke:0.1px #000;">2</div><div class="t" style="left:1146.39px;top:409.68px;font-size:15.5px;color:#000;-webkit-text-stroke:0.1px #000;">0</div><div class="t" style="left:36.87px;top:433.68px;font-size:15.5px;color:#000;letter-spacing:0.515px;-webkit-text-stroke:0.1px #000;">2023-04-24</div><div class="t" style="left:443.67px;top:433.68px;font-size:15.5px;color:#000;letter-spacing:0.617px;-webkit-text-stroke:0.1px #000;">1832</div><div class="t" style="left:696.39px;top:433.68px;font-size:15.5px;color:#000;-webkit-text-stroke:0.1px #000;">0</div><div class="t" style="left:921.39px;top:433.68px;font-size:15.5px;color:#000;-webkit-text-stroke:0.1px #000;">3</div><div class="t" style="left:1146.39px;top:433.68px;font-size:15.5px;color:#000;-webkit-text-stroke:0.1px #000;">0</div><div class="t" style="left:36.87px;top:457.68px;font-size:15.5px;color:#000;letter-spacing:0.515px;-webkit-text-stroke:0.1px #000;">2023-04-25</div><div class="t" style="left:443.67px;top:457.68px;font-size:15.5px;color:#000;letter-spacing:0.617px;-webkit-text-stroke:0.1px #000;">1832</div><div class="t" style="left:696.39px;top:457.68px;font-size:15.5px;color:#000;-webkit-text-stroke:0.1px #000;">0</div><div class="t" style="left:921.39px;top:457.68px;font-size:15.5px;color:#000;-webkit-text-stroke:0.1px #000;">0</div><div class="t" style="left:1146.39px;top:457.68px;font-size:15.5px;color:#000;-webkit-text-stroke:0.1px #000;">0</div><div class="t" style="left:36.87px;top:481.68px;font-size:15.5px;color:#000;letter-spacing:0.515px;-webkit-text-stroke:0.1px #000;">2023-04-26</div><div class="t" style="left:443.67px;top:481.68px;font-size:15.5px;color:#000;letter-spacing:0.617px;-webkit-text-stroke:0.1px #000;">1832</div><div class="t" style="left:696.39px;top:481.68px;font-size:15.5px;color:#000;-webkit-text-stroke:0.1px #000;">2</div><div class="t" style="left:921.39px;top:481.68px;font-size:15.5px;color:#000;-webkit-text-stroke:0.1px #000;">0</div><div class="t" style="left:1146.39px;top:481.68px;font-size:15.5px;color:#000;-webkit-text-stroke:0.1px #000;">0</div><div class="t" style="left:36.87px;top:505.68px;font-size:15.5px;color:#000;letter-spacing:0.515px;-webkit-text-stroke:0.1px #000;">2023-04-27</div><div class="t" style="left:443.67px;top:505.68px;font-size:15.5px;color:#000;letter-spacing:0.617px;-webkit-text-stroke:0.1px #000;">1836</div><div class="t" style="left:696.39px;top:505.68px;font-size:15.5px;color:#000;-webkit-text-stroke:0.1px #000;">0</div><div class="t" style="left:921.39px;top:505.68px;font-size:15.5px;color:#000;-webkit-text-stroke:0.1px #000;">6</div><div class="t" style="left:1146.39px;top:505.68px;font-size:15.5px;color:#000;-webkit-text-stroke:0.1px #000;">0</div><div class="t" style="left:36.87px;top:529.68px;font-size:15.5px;color:#000;letter-spacing:0.515px;-webkit-text-stroke:0.1px #000;">2023-04-28</div><div class="t" style="left:443.67px;top:529.68px;font-size:15.5px;color:#000;letter-spacing:0.617px;-webkit-text-stroke:0.1px #000;">1837</div><div class="t" style="left:696.39px;top:529.68px;font-size:15.5px;color:#000;-webkit-text-stroke:0.1px #000;">0</div><div class="t" style="left:921.39px;top:529.68px;font-size:15.5px;color:#000;-webkit-text-stroke:0.1px #000;">1</div><div class="t" style="left:1146.39px;top:529.68px;font-size:15.5px;color:#000;-webkit-text-stroke:0.1px #000;">0</div><div class="t" style="left:36.87px;top:553.68px;font-size:15.5px;color:#000;letter-spacing:0.515px;-webkit-text-stroke:0.1px #000;">2023-04-29</div><div class="t" style="left:443.67px;top:553.68px;font-size:15.5px;color:#000;letter-spacing:0.617px;-webkit-text-stroke:0.1px #000;">1837</div><div class="t" style="left:696.39px;top:553.68px;font-size:15.5px;color:#000;-webkit-text-stroke:0.1px #000;">1</div><div class="t" style="left:921.39px;top:553.68px;font-size:15.5px;color:#000;-webkit-text-stroke:0.1px #000;">0</div><div class="t" style="left:1146.39px;top:553.68px;font-size:15.5px;color:#000;-webkit-text-stroke:0.1px #000;">0</div><div class="t" style="left:36.87px;top:577.68px;font-size:15.5px;color:#000;letter-spacing:0.515px;-webkit-text-stroke:0.1px #000;">2023-04-30</div><div class="t" style="left:443.67px;top:577.68px;font-size:15.5px;color:#000;letter-spacing:0.617px;-webkit-text-stroke:0.1px #000;">1844</div><div class="t" style="left:696.39px;top:577.68px;font-size:15.5px;color:#000;-webkit-text-stroke:0.1px #000;">0</div><div class="t" style="left:921.39px;top:577.68px;font-size:15.5px;color:#000;-webkit-text-stroke:0.1px #000;">9</div><div class="t" style="left:1146.39px;top:577.68px;font-size:15.5px;color:#000;-webkit-text-stroke:0.1px #000;">0</div><div class="t" style="left:36.87px;top:601.68px;font-size:15.5px;color:#000;letter-spacing:0.515px;-webkit-text-stroke:0.1px #000;">2023-05-01</div><div class="t" style="left:443.67px;top:601.68px;font-size:15.5px;color:#000;letter-spacing:0.617px;-webkit-text-stroke:0.1px #000;">1846</div><div class="t" style="left:696.39px;top:601.68px;font-size:15.5px;color:#000;-webkit-text-stroke:0.1px #000;">0</div><div class="t" style="left:921.39px;top:601.68px;font-size:15.5px;color:#000;-webkit-text-stroke:0.1px #000;">4</div><div class="t" style="left:1146.39px;top:601.68px;font-size:15.5px;color:#000;-webkit-text-stroke:0.1px #000;">0</div><div class="t" style="left:36.87px;top:625.68px;font-size:15.5px;color:#000;letter-spacing:0.515px;-webkit-text-stroke:0.1px #000;">2023-05-02</div><div class="t" style="left:443.67px;top:625.68px;font-size:15.5px;color:#000;letter-spacing:0.617px;-webkit-text-stroke:0.1px #000;">1847</div><div class="t" style="left:696.39px;top:625.68px;font-size:15.5px;color:#000;-webkit-text-stroke:0.1px #000;">0</div><div class="t" style="left:921.39px;top:625.68px;font-size:15.5px;color:#000;-webkit-text-stroke:0.1px #000;">2</div><div class="t" style="left:1146.39px;top:625.68px;font-size:15.5px;color:#000;-webkit-text-stroke:0.1px #000;">0</div><div class="t" style="left:36.87px;top:649.68px;font-size:15.5px;color:#000;letter-spacing:0.515px;-webkit-text-stroke:0.1px #000;">2023-05-03</div><div class="t" style="left:443.67px;top:649.68px;font-size:15.5px;color:#000;letter-spacing:0.617px;-webkit-text-stroke:0.1px #000;">1848</div><div class="t" style="left:696.39px;top:649.68px;font-size:15.5px;color:#000;-webkit-text-stroke:0.1px #000;">0</div><div class="t" style="left:921.39px;top:649.68px;font-size:15.5px;color:#000;-webkit-text-stroke:0.1px #000;">2</div><div class="t" style="left:1146.39px;top:649.68px;font-size:15.5px;color:#000;-webkit-text-stroke:0.1px #000;">0</div><div class="t" style="left:36.87px;top:673.68px;font-size:15.5px;color:#000;letter-spacing:0.515px;-webkit-text-stroke:0.1px #000;">2023-05-04</div><div class="t" style="left:443.67px;top:673.68px;font-size:15.5px;color:#000;letter-spacing:0.617px;-webkit-text-stroke:0.1px #000;">1848</div><div class="t" style="left:696.39px;top:673.68px;font-size:15.5px;color:#000;-webkit-text-stroke:0.1px #000;">0</div><div class="t" style="left:921.39px;top:673.68px;font-size:15.5px;color:#000;-webkit-text-stroke:0.1px #000;">1</div><div class="t" style="left:1146.39px;top:673.68px;font-size:15.5px;color:#000;-webkit-text-stroke:0.1px #000;">0</div><div class="t" style="left:36.87px;top:697.68px;font-size:15.5px;color:#000;letter-spacing:0.515px;-webkit-text-stroke:0.1px #000;">2023-05-05</div><div class="t" style="left:443.67px;top:697.68px;font-size:15.5px;color:#000;letter-spacing:0.617px;-webkit-text-stroke:0.1px #000;">1847</div><div class="t" style="left:696.39px;top:697.68px;font-size:15.5px;color:#000;-webkit-text-stroke:0.1px #000;">1</div><div class="t" style="left:921.39px;top:697.68px;font-size:15.5px;color:#000;-webkit-text-stroke:0.1px #000;">0</div><div class="t" style="left:1146.39px;top:697.68px;font-size:15.5px;color:#000;-webkit-text-stroke:0.1px #000;">0</div><div class="t" style="left:36.87px;top:721.68px;font-size:15.5px;color:#000;letter-spacing:0.515px;-webkit-text-stroke:0.1px #000;">2023-05-06</div><div class="t" style="left:443.67px;top:721.68px;font-size:15.5px;color:#000;letter-spacing:0.617px;-webkit-text-stroke:0.1px #000;">1851</div><div class="t" style="left:696.39px;top:721.68px;font-size:15.5px;color:#000;-webkit-text-stroke:0.1px #000;">0</div><div class="t" style="left:921.39px;top:721.68px;font-size:15.5px;color:#000;-webkit-text-stroke:0.1px #000;">6</div><div class="t" style="left:1146.39px;top:721.68px;font-size:15.5px;color:#000;-webkit-text-stroke:0.1px #000;">0</div><div class="t" style="left:36.87px;top:745.68px;font-size:15.5px;color:#000;letter-spacing:0.515px;-webkit-text-stroke:0.1px #000;">2023-05-07</div><div class="t" style="left:443.67px;top:745.68px;font-size:15.5px;color:#000;letter-spacing:0.617px;-webkit-text-stroke:0.1px #000;">1850</div><div class="t" style="left:696.39px;top:745.68px;font-size:15.5px;color:#000;-webkit-text-stroke:0.1px #000;">1</div><div class="t" style="left:921.39px;top:745.68px;font-size:15.5px;color:#000;-webkit-text-stroke:0.1px #000;">0</div><div class="t" style="left:1146.39px;top:745.68px;font-size:15.5px;color:#000;-webkit-text-stroke:0.1px #000;">0</div><div class="t" style="left:36.87px;top:769.68px;font-size:15.5px;color:#000;letter-spacing:0.515px;-webkit-text-stroke:0.1px #000;">2023-05-08</div><div class="t" style="left:443.67px;top:769.68px;font-size:15.5px;color:#000;letter-spacing:0.617px;-webkit-text-stroke:0.1px #000;">1852</div><div class="t" style="left:696.39px;top:769.68px;font-size:15.5px;color:#000;-webkit-text-stroke:0.1px #000;">1</div><div class="t" style="left:921.39px;top:769.68px;font-size:15.5px;color:#000;-webkit-text-stroke:0.1px #000;">2</div><div class="t" style="left:1146.39px;top:769.68px;font-size:15.5px;color:#000;-webkit-text-stroke:0.1px #000;">0</div><div class="t" style="left:36.87px;top:793.68px;font-size:15.5px;color:#000;letter-spacing:0.515px;-webkit-text-stroke:0.1px #000;">2023-05-09</div><div class="t" style="left:443.67px;top:793.68px;font-size:15.5px;color:#000;letter-spacing:0.617px;-webkit-text-stroke:0.1px #000;">1855</div><div class="t" style="left:696.39px;top:793.68px;font-size:15.5px;color:#000;-webkit-text-stroke:0.1px #000;">0</div><div class="t" style="left:921.39px;top:793.68px;font-size:15.5px;color:#000;-webkit-text-stroke:0.1px #000;">3</div><div class="t" style="left:1146.39px;top:793.68px;font-size:15.5px;color:#000;-webkit-text-stroke:0.1px #000;">0</div><div class="t" style="left:36.87px;top:817.68px;font-size:15.5px;color:#000;letter-spacing:0.515px;-webkit-text-stroke:0.1px #000;">2023-05-10</div><div class="t" style="left:443.67px;top:817.68px;font-size:15.5px;color:#000;letter-spacing:0.617px;-webkit-text-stroke:0.1px #000;">1855</div><div class="t" style="left:696.39px;top:817.68px;font-size:15.5px;color:#000;-webkit-text-stroke:0.1px #000;">0</div><div class="t" style="left:921.39px;top:817.68px;font-size:15.5px;color:#000;-webkit-text-stroke:0.1px #000;">0</div><div class="t" style="left:1146.39px;top:817.68px;font-size:15.5px;color:#000;-webkit-text-stroke:0.1px #000;">0</div><div class="t" style="left:36.87px;top:841.68px;font-size:15.5px;color:#000;letter-spacing:0.644px;-webkit-text-stroke:0.1px #000;">2023-05-11</div><div class="t" style="left:443.67px;top:841.68px;font-size:15.5px;color:#000;letter-spacing:0.617px;-webkit-text-stroke:0.1px #000;">1856</div><div class="t" style="left:696.39px;top:841.68px;font-size:15.5px;color:#000;-webkit-text-stroke:0.1px #000;">0</div><div class="t" style="left:921.39px;top:841.68px;font-size:15.5px;color:#000;-webkit-text-stroke:0.1px #000;">1</div><div class="t" style="left:1146.39px;top:841.68px;font-size:15.5px;color:#000;-webkit-text-stroke:0.1px #000;">0</div><div class="t" style="left:36.87px;top:865.68px;font-size:15.5px;color:#000;letter-spacing:0.515px;-webkit-text-stroke:0.1px #000;">2023-05-12</div><div class="t" style="left:443.67px;top:865.68px;font-size:15.5px;color:#000;letter-spacing:0.617px;-webkit-text-stroke:0.1px #000;">1856</div><div class="t" style="left:696.39px;top:865.68px;font-size:15.5px;color:#000;-webkit-text-stroke:0.1px #000;">0</div><div class="t" style="left:921.39px;top:865.68px;font-size:15.5px;color:#000;-webkit-text-stroke:0.1px #000;">0</div><div class="t" style="left:1146.39px;top:865.68px;font-size:15.5px;color:#000;-webkit-text-stroke:0.1px #000;">0</div><div class="t" style="left:36.87px;top:889.68px;font-size:15.5px;color:#000;letter-spacing:0.515px;-webkit-text-stroke:0.1px #000;">2023-05-13</div><div class="t" style="left:443.67px;top:889.68px;font-size:15.5px;color:#000;letter-spacing:0.617px;-webkit-text-stroke:0.1px #000;">1861</div><div class="t" style="left:696.39px;top:889.68px;font-size:15.5px;color:#000;-webkit-text-stroke:0.1px #000;">0</div><div class="t" style="left:921.39px;top:889.68px;font-size:15.5px;color:#000;-webkit-text-stroke:0.1px #000;">5</div><div class="t" style="left:1146.39px;top:889.68px;font-size:15.5px;color:#000;-webkit-text-stroke:0.1px #000;">0</div><div class="t" style="left:36.87px;top:913.68px;font-size:15.5px;color:#000;letter-spacing:0.515px;-webkit-text-stroke:0.1px #000;">2023-05-14</div><div class="t" style="left:443.67px;top:913.68px;font-size:15.5px;color:#000;letter-spacing:0.617px;-webkit-text-stroke:0.1px #000;">1863</div><div class="t" style="left:696.39px;top:913.68px;font-size:15.5px;color:#000;-webkit-text-stroke:0.1px #000;">0</div><div class="t" style="left:921.39px;top:913.68px;font-size:15.5px;color:#000;-webkit-text-stroke:0.1px #000;">4</div><div class="t" style="left:1146.39px;top:913.68px;font-size:15.5px;color:#000;-webkit-text-stroke:0.1px #000;">0</div><div class="t" style="left:36.87px;top:937.68px;font-size:15.5px;color:#000;letter-spacing:0.515px;-webkit-text-stroke:0.1px #000;">2023-05-15</div><div class="t" style="left:443.67px;top:937.68px;font-size:15.5px;color:#000;letter-spacing:0.617px;-webkit-text-stroke:0.1px #000;">1863</div><div class="t" style="left:696.39px;top:937.68px;font-size:15.5px;color:#000;-webkit-text-stroke:0.1px #000;">0</div><div class="t" style="left:921.39px;top:937.68px;font-size:15.5px;color:#000;-webkit-text-stroke:0.1px #000;">0</div><div class="t" style="left:1146.39px;top:937.68px;font-size:15.5px;color:#000;-webkit-text-stroke:0.1px #000;">0</div><div class="r" style="left:1895px;top:258px;width:22px;height:686px;background:#f4f4f4;border-radius:8px 0 0 0;"></div><svg class="r" style="left:1901px;top:266px;" width="12" height="10" viewBox="0 0 12 10"><path d="M1 9 L6 1.5 L11 9 Z" fill="#6e6e6e" stroke="#6e6e6e" stroke-width="1" stroke-linejoin="round"/></svg><div class="r" style="left:1902px;top:282px;width:10px;height:285px;background:#6e6e6e;border-radius:5px;"></div><svg class="r" style="left:1901px;top:931px;" width="12" height="10" viewBox="0 0 12 10"><path d="M1 1.5 L6 9 L11 1.5 Z" fill="#6e6e6e" stroke="#6e6e6e" stroke-width="1" stroke-linejoin="round"/></svg><div class="r" style="left:1848px;top:842px;width:59px;height:60px;background:rgba(196,196,204,0.72);border-radius:14px;"></div><div class="r" style="left:1852px;top:846px;width:51px;height:52px;background:rgba(150,150,160,0.62);border-radius:11px;"></div><svg class="r" style="left:1858px;top:852px;" width="40" height="40" viewBox="0 0 40 40">
      <path d="M20.6 4 L31.3 5.6 L17.8 21.2 Q13.8 24.2 10.2 21.8 Q7.4 19 9.6 16 Z" fill="#c9e3fb" opacity="0.95"/>
      <path d="M7.9 33.3 L22.5 17.6 Q26.5 15 30.5 17.2 Q33.6 19.8 31.6 23.2 L16.2 35.3 Z" fill="#d4eafc" opacity="0.95"/>
    </svg>
<div class="r" style="left:0px;top:944px;width:1917px;height:40px;background:#efefef;"></div><div class="r" style="left:0px;top:984px;width:1917px;height:24px;background:#f6f6f6;border-top:1px solid #fbfbfb;"></div><div class="r" style="left:0px;top:944px;width:1895px;height:1px;background:#d9d9d9;"></div><svg class="r" style="left:30px;top:955px;" width="11" height="15" viewBox="0 0 11 15"><path d="M9 1.5 L2.5 7.5 L9 13.5" fill="none" stroke="#a0a0a0" stroke-width="1.3"/></svg><svg class="r" style="left:71px;top:955px;" width="11" height="15" viewBox="0 0 11 15"><path d="M2 1.5 L8.5 7.5 L2 13.5" fill="none" stroke="#a0a0a0" stroke-width="1.3"/></svg><div class="r" style="left:141px;top:944px;width:138px;height:35px;background:#fff;border-radius:0 0 7px 7px;box-shadow:0 1px 1px rgba(0,0,0,0.06);"></div><svg class="r" style="left:134px;top:944px;" width="7" height="7" viewBox="0 0 7 7"><path d="M0 0 H7 V7 A7 7 0 0 0 0 0 Z" fill="#fff"/></svg><svg class="r" style="left:279px;top:944px;" width="7" height="7" viewBox="0 0 7 7"><path d="M7 0 H0 V7 A7 7 0 0 1 7 0 Z" fill="#fff"/></svg><div class="t" style="left:150.98px;top:952.41px;font-size:17px;color:#242424;font-weight:700;letter-spacing:-0.086px;">Daily Numbers</div><div class="r" style="left:151px;top:973px;width:118px;height:2.5px;background:#137a3f;border-radius:1px;"></div><div class="r" style="left:284px;top:953px;width:1px;height:22px;background:#c8c8c8;"></div><svg class="r" style="left:336px;top:955px;" width="17" height="16" viewBox="0 0 17 16"><path d="M8.5 1 V15 M1.5 8 H15.5" stroke="#333" stroke-width="1.5"/></svg><div class="r" style="left:1154.5px;top:957.5px;width:3px;height:3px;background:#444;"></div><div class="r" style="left:1154.5px;top:962.5px;width:3px;height:3px;background:#444;"></div><div class="r" style="left:1154.5px;top:967.5px;width:3px;height:3px;background:#444;"></div><div class="r" style="left:1176px;top:952px;width:719px;height:22px;background:#f3f3f3;border-radius:11px;"></div><svg class="r" style="left:1181px;top:957px;" width="11" height="12" viewBox="0 0 11 12"><path d="M9.5 1 L1.5 6 L9.5 11 Z" fill="#6e6e6e" stroke="#6e6e6e" stroke-width="1" stroke-linejoin="round"/></svg><div class="r" style="left:1197px;top:958px;width:630px;height:11px;background:#6e6e6e;border-radius:5.5px;"></div><svg class="r" style="left:1881px;top:957px;" width="11" height="12" viewBox="0 0 11 12"><path d="M1.5 1 L9.5 6 L1.5 11 Z" fill="#6e6e6e" stroke="#6e6e6e" stroke-width="1" stroke-linejoin="round"/></svg><div class="t" style="left:8.62px;top:992.30px;font-size:13px;color:#333;letter-spacing:-0.198px;">Ready</div><svg class="r" style="left:69px;top:988px;" width="21" height="20" viewBox="0 0 21 20">
      <circle cx="9" cy="3" r="2" fill="none" stroke="#444" stroke-width="1.2"/>
      <path d="M1.5 5 C4 7 6 7.5 9 7.5 C12 7.5 14 7 16.5 5 M6.5 7.5 L5 13 L7.5 18.5 M11.5 7.5 L11 11" fill="none" stroke="#444" stroke-width="1.2"/>
      <path d="M10.5 15 L13.5 18 L19.5 11.5" fill="none" stroke="#444" stroke-width="1.3"/>
    </svg><div class="t" style="left:91.12px;top:992.30px;font-size:13px;color:#333;letter-spacing:0.105px;">Accessibility: Good to go</div><div class="r" style="left:1548px;top:985px;width:50px;height:23px;background:#dcdcdc;"></div><svg class="r" style="left:1563px;top:988px;" width="19" height="19" viewBox="0 0 19 19"><rect x="1" y="1" width="16" height="16" fill="none" stroke="#444" stroke-width="1.5"/><path d="M6.3 1 V17 M11.7 1 V17 M1 6.3 H17 M1 11.7 H17" stroke="#444" stroke-width="1.5"/></svg><svg class="r" style="left:1613px;top:988px;" width="20" height="19" viewBox="0 0 20 19"><rect x="1.6" y="1.6" width="17" height="15.8" rx="0.8" fill="none" stroke="#444" stroke-width="1.6"/><rect x="5.6" y="4.6" width="9" height="10" fill="#f0f0f0" stroke="#333" stroke-width="1.4"/><path d="M7.5 7.5 H12.5 M7.5 10 H12.5 M7.5 12.3 H12.5" stroke="#555" stroke-width="1.1"/></svg><svg class="r" style="left:1663px;top:988px;" width="20" height="19" viewBox="0 0 20 19"><rect x="1.4" y="1.4" width="17" height="15.8" rx="0.8" fill="none" stroke="#444" stroke-width="1.6"/><path d="M1.4 10.3 H11.6 V1.4 M6.6 1.4 V10.3" fill="none" stroke="#444" stroke-width="1.4"/></svg><div class="r" style="left:1705px;top:997px;width:9px;height:1.4px;background:#444;"></div><div class="r" style="left:1721px;top:997px;width:125px;height:1px;background:#6b6b6b;"></div><div class="r" style="left:1781px;top:991px;width:6px;height:14px;background:#666;border-radius:1px;"></div><svg class="r" style="left:1851px;top:992px;" width="11" height="11" viewBox="0 0 11 11"><path d="M5.5 0.5 V10.5 M0.5 5.5 H10.5" stroke="#444" stroke-width="1.3"/></svg><div class="t" style="left:1877.82px;top:992.70px;font-size:13px;color:#333;letter-spacing:-0.655px;">100%</div>
</body></html>
